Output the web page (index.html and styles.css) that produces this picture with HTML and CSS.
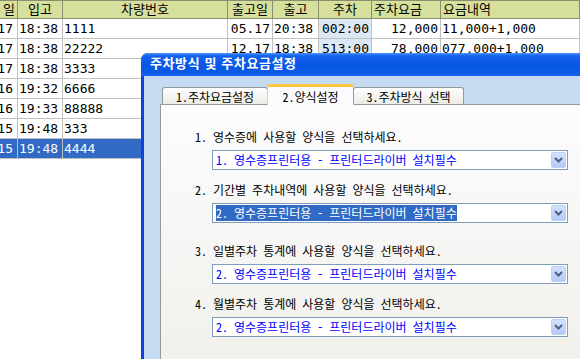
FILE: index.html
```html
<!DOCTYPE html>
<html lang="ko">

<head>
  <meta charset="UTF-8">
  <title>주차방식 및 주차요금설정</title>
  <link rel="stylesheet" href="styles.css">
</head>

<body>
  <div class="sheet">
    <div class="head first">일</div>
    <div class="head">입고</div>
    <div class="head">차량번호</div>
    <div class="head">출고일</div>
    <div class="head">출고</div>
    <div class="head">주차</div>
    <div class="head l">주차요금</div>
    <div class="head l">요금내역</div>

    <div class="cell first">17</div><div class="cell">18:38</div><div class="cell">1111</div><div class="cell r">05.17</div><div class="cell">20:38</div><div class="cell park">002:00</div><div class="cell r">12,000</div><div class="cell">11,000+1,000</div>
    <div class="cell first">17</div><div class="cell">18:38</div><div class="cell">22222</div><div class="cell r">12.17</div><div class="cell">18:38</div><div class="cell park">513:00</div><div class="cell r">78,000</div><div class="cell">077,000+1,000</div>
    <div class="cell first">17</div><div class="cell">18:38</div><div class="cell">3333</div><div class="cell"></div><div class="cell"></div><div class="cell park"></div><div class="cell"></div><div class="cell"></div>
    <div class="cell first">16</div><div class="cell">19:32</div><div class="cell">6666</div><div class="cell"></div><div class="cell"></div><div class="cell park"></div><div class="cell"></div><div class="cell"></div>
    <div class="cell first">16</div><div class="cell">19:33</div><div class="cell">88888</div><div class="cell"></div><div class="cell"></div><div class="cell park"></div><div class="cell"></div><div class="cell"></div>
    <div class="cell first">15</div><div class="cell">19:48</div><div class="cell">333</div><div class="cell"></div><div class="cell"></div><div class="cell park"></div><div class="cell"></div><div class="cell"></div>
    <div class="cell first sel">15</div><div class="cell sel">19:48</div><div class="cell sel">4444</div><div class="cell sel"></div><div class="cell sel"></div><div class="cell sel"></div><div class="cell sel"></div><div class="cell sel"></div>
  </div>

  <div class="dialog">
    <div class="titlebar">주차방식 및 주차요금설정</div>
    <div class="dialog-body">
      <div class="tabs">
        <div class="tab t1">1.주차요금설정</div>
        <div class="tab t2 active">2.양식설정</div>
        <div class="tab t3">3.주차방식 선택</div>
      </div>
      <div class="page">
        <div class="field">
          <div class="field-label">1. 영수증에 사용할 양식을 선택하세요.</div>
          <div class="combo">
            <span class="combo-text">1. 영수증프린터용 - 프린터드라이버 설치필수</span>
            <i class="combo-btn"><svg width="9" height="6" viewBox="0 0 9 6"><path d="M1 1 L4.5 4.5 L8 1" fill="none" stroke="#4d6185" stroke-width="2"/></svg></i>
          </div>
        </div>
        <div class="field">
          <div class="field-label">2. 기간별 주차내역에 사용할 양식을 선택하세요.</div>
          <div class="combo">
            <span class="combo-text picked">2. 영수증프린터용 - 프린터드라이버 설치필수</span>
            <i class="combo-btn"><svg width="9" height="6" viewBox="0 0 9 6"><path d="M1 1 L4.5 4.5 L8 1" fill="none" stroke="#4d6185" stroke-width="2"/></svg></i>
          </div>
        </div>
        <div class="field wide">
          <div class="field-label">3. 일별주차 통계에 사용할 양식을 선택하세요.</div>
          <div class="combo">
            <span class="combo-text">2. 영수증프린터용 - 프린터드라이버 설치필수</span>
            <i class="combo-btn"><svg width="9" height="6" viewBox="0 0 9 6"><path d="M1 1 L4.5 4.5 L8 1" fill="none" stroke="#4d6185" stroke-width="2"/></svg></i>
          </div>
        </div>
        <div class="field">
          <div class="field-label">4. 월별주차 통계에 사용할 양식을 선택하세요.</div>
          <div class="combo">
            <span class="combo-text">2. 영수증프린터용 - 프린터드라이버 설치필수</span>
            <i class="combo-btn"><svg width="9" height="6" viewBox="0 0 9 6"><path d="M1 1 L4.5 4.5 L8 1" fill="none" stroke="#4d6185" stroke-width="2"/></svg></i>
          </div>
        </div>
      </div>
    </div>
  </div>
</body>

</html>
```

FILE: styles.css
```css
body {
  margin: 0;
  width: 580px;
  height: 359px;
  overflow: hidden;
  background: #fff;
  position: relative;
}

.sheet {
  display: grid;
  grid-template-columns: 18px 45px 165px 45px 46px 53px 69px 139px;
  grid-template-rows: 19px;
  grid-auto-rows: 20px;
  font: 13px "DejaVu Sans Mono", "Noto Sans CJK KR", monospace;
  color: #000;
}

.sheet .head {
  background: #d6e09c;
  border-top: 1px solid #8a8f70;
  border-right: 1px solid #8a8f70;
  border-bottom: 1px solid #8a8f70;
  box-sizing: border-box;
  text-align: center;
  line-height: 17px;
  overflow: hidden;
  white-space: nowrap;
}

.sheet .head.l {
  text-align: left;
  padding-left: 2px;
}

.sheet .cell {
  border-right: 1px solid #c0c0c0;
  border-bottom: 1px solid #c0c0c0;
  box-sizing: border-box;
  line-height: 20px;
  padding: 0 1px;
  overflow: hidden;
  white-space: nowrap;
}

/* 왼쪽으로 스크롤되어 잘린 첫 열 */
.sheet .first {
  display: flex;
  justify-content: flex-end;
  padding: 0 4px 0 0;
}

.sheet .head.first {
  padding-right: 2px;
}

.sheet .r {
  text-align: right;
  padding-right: 2px;
}

.sheet .park {
  background: #dce8f6;
  padding-left: 3px;
}

.sheet .sel {
  background: #316ac5;
  color: #fff;
}

/* 대화상자 */
.dialog {
  position: absolute;
  left: 141px;
  top: 53px;
  width: 470px;
  height: 330px;
  background: #0b44dc;
  border-radius: 7px 7px 0 0;
  overflow: hidden;
}

.titlebar {
  height: 23px;
  line-height: 24px;
  padding-left: 9px;
  color: #fff;
  font: bold 13px "Noto Sans CJK KR", sans-serif;
  letter-spacing: 0.6px;
  background: linear-gradient(#4a97fb 0, #1463ee 12%, #0856e4 55%, #0b5ae8 85%, #1a66ec 100%);
}

.dialog-body {
  margin-left: 3px;
  height: 100%;
  background: #c4dbf2;
  padding: 8px 0 0 16px;
  font: 12px "Noto Sans CJK KR", sans-serif;
  font-feature-settings: "hwid" 1;
  color: #000;
}

.tabs {
  display: flex;
  align-items: flex-end;
  padding-left: 2px;
  position: relative;
  z-index: 1;
}

.tab {
  height: 17px;
  line-height: 17px;
  box-sizing: border-box;
  border: 1px solid #919b9c;
  border-bottom: none;
  border-radius: 3px 3px 0 0;
  background: linear-gradient(#fff, #ecebe5);
  text-align: center;
  margin-bottom: 1px;
}

.tab.t1 { width: 106px; }
.tab.t2 { width: 87px; }
.tab.t3 { width: 111px; }

.tab.active {
  height: 21px;
  line-height: 19px;
  margin-bottom: 0;
  background: #fcfcfe;
  border-top: 3px solid #ffc83c;
  border-left-color: #c9ccd0;
  border-right-color: #c9ccd0;
  margin-left: -1px;
  margin-right: -1px;
}

.page {
  margin-top: -1px;
  height: 260px;
  border: 1px solid #919b9c;
  background: linear-gradient(#fcfcfe, #f0efe9);
  padding: 24px 0 0 34px;
}

.field + .field {
  margin-top: 12px;
}

.field.wide {
  margin-top: 20px;
}

.field-label {
  height: 16px;
  line-height: 16px;
  white-space: nowrap;
}

.combo {
  margin: 5px 0 0 17px;
  width: 356px;
  height: 20px;
  box-sizing: border-box;
  border: 1px solid #7f9db9;
  background: #fff;
  display: flex;
  align-items: center;
  padding: 0 1px 0 3px;
}

.combo-text {
  flex: 1;
  color: #0000ff;
  line-height: 16px;
  white-space: nowrap;
}

.combo-text.picked {
  flex: none;
  margin-right: auto;
  background: #316ac5;
  color: #fff;
}

.combo-btn {
  width: 15px;
  height: 16px;
  box-sizing: border-box;
  border: 1px solid #bdd0f9;
  border-radius: 2px;
  background: linear-gradient(#d4e1fd, #b3c9f7);
  display: flex;
  align-items: center;
  justify-content: center;
}
```
